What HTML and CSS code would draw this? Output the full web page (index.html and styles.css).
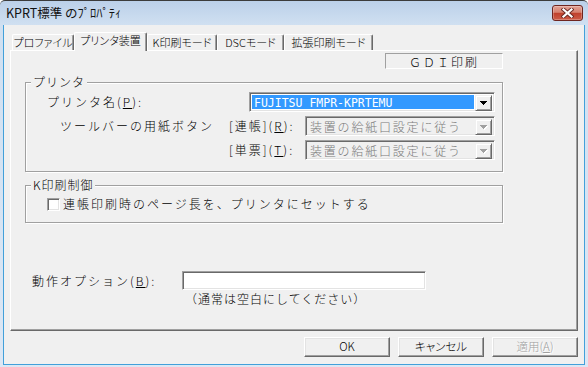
FILE: index.html
```html
<!DOCTYPE html>
<html lang="ja">
<head>
    <meta charset="UTF-8">
    <title>KPRT標準 のﾌﾟﾛﾊﾟﾃｨ</title>
    <link rel="stylesheet" href="styles.css">
</head>
<body>
    <div class="window">
        <div class="titlebar">
            <span class="title">KPRT標準 のﾌﾟﾛﾊﾟﾃｨ</span>
            <div class="close-btn">
                <svg width="13" height="10" viewBox="0 0 13 10">
                    <path d="M2.5 1.5l8 7M10.5 1.5l-8 7" stroke="#6b2a25" stroke-width="4" stroke-linecap="square"/>
                    <path d="M2.5 1.5l8 7M10.5 1.5l-8 7" stroke="#fff" stroke-width="2.2" stroke-linecap="square"/>
                </svg>
            </div>
        </div>

        <div class="client">
            <div class="tabs">
                <div class="tab tab-profile">プロファイル</div>
                <div class="tab tab-printer active">プリンタ装置</div>
                <div class="tab tab-kmode">K印刷モード</div>
                <div class="tab tab-dsc">DSCモード</div>
                <div class="tab tab-ext">拡張印刷モード</div>
            </div>

            <div class="panel">
                <div class="mode-row">
                    <div class="mode-box">ＧＤＩ印刷</div>
                </div>

                <!-- プリンタ -->
                <div class="group group-printer">
                    <div class="group-title">プリンタ</div>
                    <div class="group-body">
                        <div class="form-row">
                            <span class="field-label">プリンタ名(<u>P</u>):</span>
                            <div class="combo combo-printer">
                                <div class="combo-text selected">FUJITSU FMPR-KPRTEMU</div>
                                <div class="combo-btn">
                                    <svg width="7" height="4" viewBox="0 0 7 4"><path d="M0 0h7v1h-1v1h-1v1h-1v1h-1v-1h-1v-1h-1v-1h-1z" fill="#000"/></svg>
                                </div>
                            </div>
                        </div>
                        <div class="form-row">
                            <span class="field-label toolbar-label">ツールバーの用紙ボタン</span>
                            <span class="sub-label">[連帳](<u>R</u>):</span>
                            <div class="combo combo-paper disabled">
                                <div class="combo-text">装置の給紙口設定に従う</div>
                                <div class="combo-btn">
                                    <svg width="8" height="5" viewBox="0 0 8 5"><path d="M1 1h7v1h-1v1h-1v1h-1v1h-1v-1h-1v-1h-1v-1h-1z" fill="#fff"/><path d="M0 0h7v1h-1v1h-1v1h-1v1h-1v-1h-1v-1h-1v-1h-1z" fill="#a0a0a0"/></svg>
                                </div>
                            </div>
                        </div>
                        <div class="form-row">
                            <span class="sub-label">[単票](<u>T</u>):</span>
                            <div class="combo combo-paper disabled">
                                <div class="combo-text">装置の給紙口設定に従う</div>
                                <div class="combo-btn">
                                    <svg width="8" height="5" viewBox="0 0 8 5"><path d="M1 1h7v1h-1v1h-1v1h-1v1h-1v-1h-1v-1h-1v-1h-1z" fill="#fff"/><path d="M0 0h7v1h-1v1h-1v1h-1v1h-1v-1h-1v-1h-1v-1h-1z" fill="#a0a0a0"/></svg>
                                </div>
                            </div>
                        </div>
                    </div>
                </div>

                <!-- K印刷制御 -->
                <div class="group group-kprint">
                    <div class="group-title">K印刷制御</div>
                    <div class="check-row">
                        <span class="checkbox"></span>
                        <span class="check-label">連帳印刷時のページ長を、プリンタにセットする</span>
                    </div>
                </div>

                <div class="option-row">
                    <span class="field-label option-label">動作オプション(<u>B</u>):</span>
                    <div class="text-input"></div>
                </div>
                <div class="hint">（通常は空白にしてください）</div>
            </div>

            <div class="button-row">
                <div class="btn">OK</div>
                <div class="btn">キャンセル</div>
                <div class="btn disabled">適用(<u>A</u>)</div>
            </div>
        </div>
    </div>
</body>
</html>
```

FILE: styles.css
```css
* {
    box-sizing: border-box;
}
body {
    margin: 0;
    font-family: "Noto Sans CJK JP", sans-serif;
    font-size: 12px;
    font-weight: 300;
    line-height: 14px;
    color: #000;
    background: #fff;
}
.window {
    width: 588px;
    height: 367px;
    display: flex;
    flex-direction: column;
    padding: 0 3px 2px;
    border-top: 1px solid #3b3b3b;
    border-radius: 5px 5px 0 0;
    background: linear-gradient(#bbd0e9, #d0e0f1 24px, #dce7f4);
}
.titlebar {
    height: 24px;
    display: flex;
    justify-content: space-between;
    align-items: flex-start;
    padding: 4px 2px 0 3px;
}
.title {
    line-height: 16px;
    font-size: 12.5px;
    font-weight: 400;
    color: #111;
}
.close-btn {
    width: 31px;
    height: 16px;
    display: flex;
    align-items: center;
    justify-content: center;
    border: 1px solid #6e2520;
    border-radius: 3px;
    background: linear-gradient(#e3a397, #d6816f 45%, #c0402c 52%, #cd5c48);
    box-shadow: inset 0 0 0 1px rgba(255, 255, 255, 0.25);
}
.client {
    flex: 1;
    background-color: #f0f0f0;
    border: 1px solid #42a0da;
    border-top: none;
    padding: 0 6px;
}

/* tabs */
.tabs {
    height: 25px;
    display: flex;
    align-items: flex-end;
    padding-left: 2px;
}
.tab {
    height: 16px;
    line-height: 14px;
    font-size: 11px;
    text-align: center;
    white-space: nowrap;
    font-feature-settings: "palt";
    border-top: 1px solid #fff;
    border-left: 1px solid #fff;
    border-right: 1px solid #696969;
    box-shadow: inset -1px 0 #a0a0a0;
    border-radius: 2px 2px 0 0;
}
.tab.active {
    height: 19px;
    margin-bottom: -1px;
    position: relative;
    z-index: 1;
    background-color: #f0f0f0;
}
.tab-profile { width: 62px; }
.tab-printer { width: 73px; }
.tab-kmode { width: 70px; }
.tab-dsc { width: 67px; }
.tab-ext { width: 89px; }

.panel {
    height: 281px;
    border-top: 1px solid #fff;
    border-left: 1px solid #fff;
    border-right: 1px solid #696969;
    border-bottom: 1px solid #696969;
    box-shadow: inset -1px -1px #a0a0a0;
    padding: 2px 0 0 14px;
}
.mode-row {
    width: 478px;
    display: flex;
    justify-content: flex-end;
}
.mode-box {
    width: 118px;
    height: 16px;
    border: 1px solid;
    border-color: #a0a0a0 #fff #fff #a0a0a0;
    text-align: center;
    letter-spacing: 2px;
    line-height: 15px;
}

/* group boxes */
.group {
    width: 478px;
    margin-top: 13px;
    padding-right: 7px;
    border: 1px solid #a0a0a0;
    box-shadow: 1px 1px 0 #fff, inset 1px 1px 0 #fff;
}
.group-printer {
    padding-bottom: 11px;
}
.group-kprint {
    padding-bottom: 10px;
}
.group-title {
    width: fit-content;
    margin: -8px 0 0 5px;
    padding: 0 2px;
    background-color: #f0f0f0;
    letter-spacing: 1px;
}
.group-body {
    display: flex;
    flex-direction: column;
    gap: 4px;
    margin-top: 3px;
}
.form-row {
    height: 20px;
    display: flex;
    align-items: center;
}
.field-label {
    margin-left: 21px;
    letter-spacing: 2px;
}
.toolbar-label {
    margin-left: 34px;
}
.sub-label {
    width: 76px;
    margin-left: auto;
    letter-spacing: 2px;
}

/* combo boxes */
.combo {
    height: 20px;
    display: flex;
    padding: 2px;
    border: 1px solid;
    border-color: #a0a0a0 #fff #fff #a0a0a0;
    box-shadow: inset 1px 1px #696969, inset -1px -1px #e3e3e3;
    background-color: #fff;
}
.combo-printer {
    width: 246px;
    margin-left: auto;
}
.combo-paper {
    width: 190px;
}
.combo-text {
    flex: 1;
    margin-right: 1px;
    padding-left: 2px;
    line-height: 16px;
    letter-spacing: 1.8px;
    white-space: nowrap;
}
.combo-text.selected {
    background-color: #3399ff;
    color: #fff;
    font-family: "DejaVu Sans Mono", monospace;
    font-size: 11.5px;
    font-weight: 400;
    letter-spacing: 0;
}
.combo.disabled {
    background-color: #f0f0f0;
}
.combo.disabled .combo-text {
    color: #7a7a7a;
}
.combo-btn {
    width: 17px;
    height: 16px;
    flex-shrink: 0;
    display: flex;
    align-items: center;
    justify-content: center;
    border: 1px solid;
    border-color: #f0f0f0 #696969 #696969 #f0f0f0;
    box-shadow: inset 1px 1px #fff, inset -1px -1px #a0a0a0;
    background-color: #f0f0f0;
}

/* checkbox */
.check-row {
    height: 16px;
    display: flex;
    align-items: center;
    margin-top: 4px;
    padding-left: 21px;
}
.checkbox {
    width: 13px;
    height: 13px;
    margin-right: 3px;
    border: 1px solid;
    border-color: #a0a0a0 #fff #fff #a0a0a0;
    box-shadow: inset 1px 1px #696969, inset -1px -1px #e3e3e3;
    background-color: #fff;
}
.check-label {
    letter-spacing: 2px;
}

/* option */
.option-row {
    display: flex;
    align-items: center;
    margin-top: 48px;
}
.option-label {
    width: 150px;
    margin-left: 7px;
}
.text-input {
    width: 244px;
    height: 19px;
    border: 1px solid;
    border-color: #a0a0a0 #fff #fff #a0a0a0;
    box-shadow: inset 1px 1px #696969, inset -1px -1px #e3e3e3;
    background-color: #fff;
}
.hint {
    margin: 2px 0 0 160px;
    letter-spacing: 1px;
}

/* buttons */
.button-row {
    display: flex;
    justify-content: flex-end;
    gap: 8px;
    margin-top: 6px;
}
.btn {
    width: 86px;
    height: 20px;
    line-height: 17px;
    font-size: 11.5px;
    text-align: center;
    font-feature-settings: "palt";
    border: 1px solid;
    border-color: #fff #696969 #696969 #fff;
    box-shadow: inset -1px -1px #a0a0a0, inset 1px 1px #e3e3e3;
    background-color: #f0f0f0;
}
.btn.disabled {
    color: #a0a0a0;
    text-shadow: 1px 1px 0 #fff;
}
```
